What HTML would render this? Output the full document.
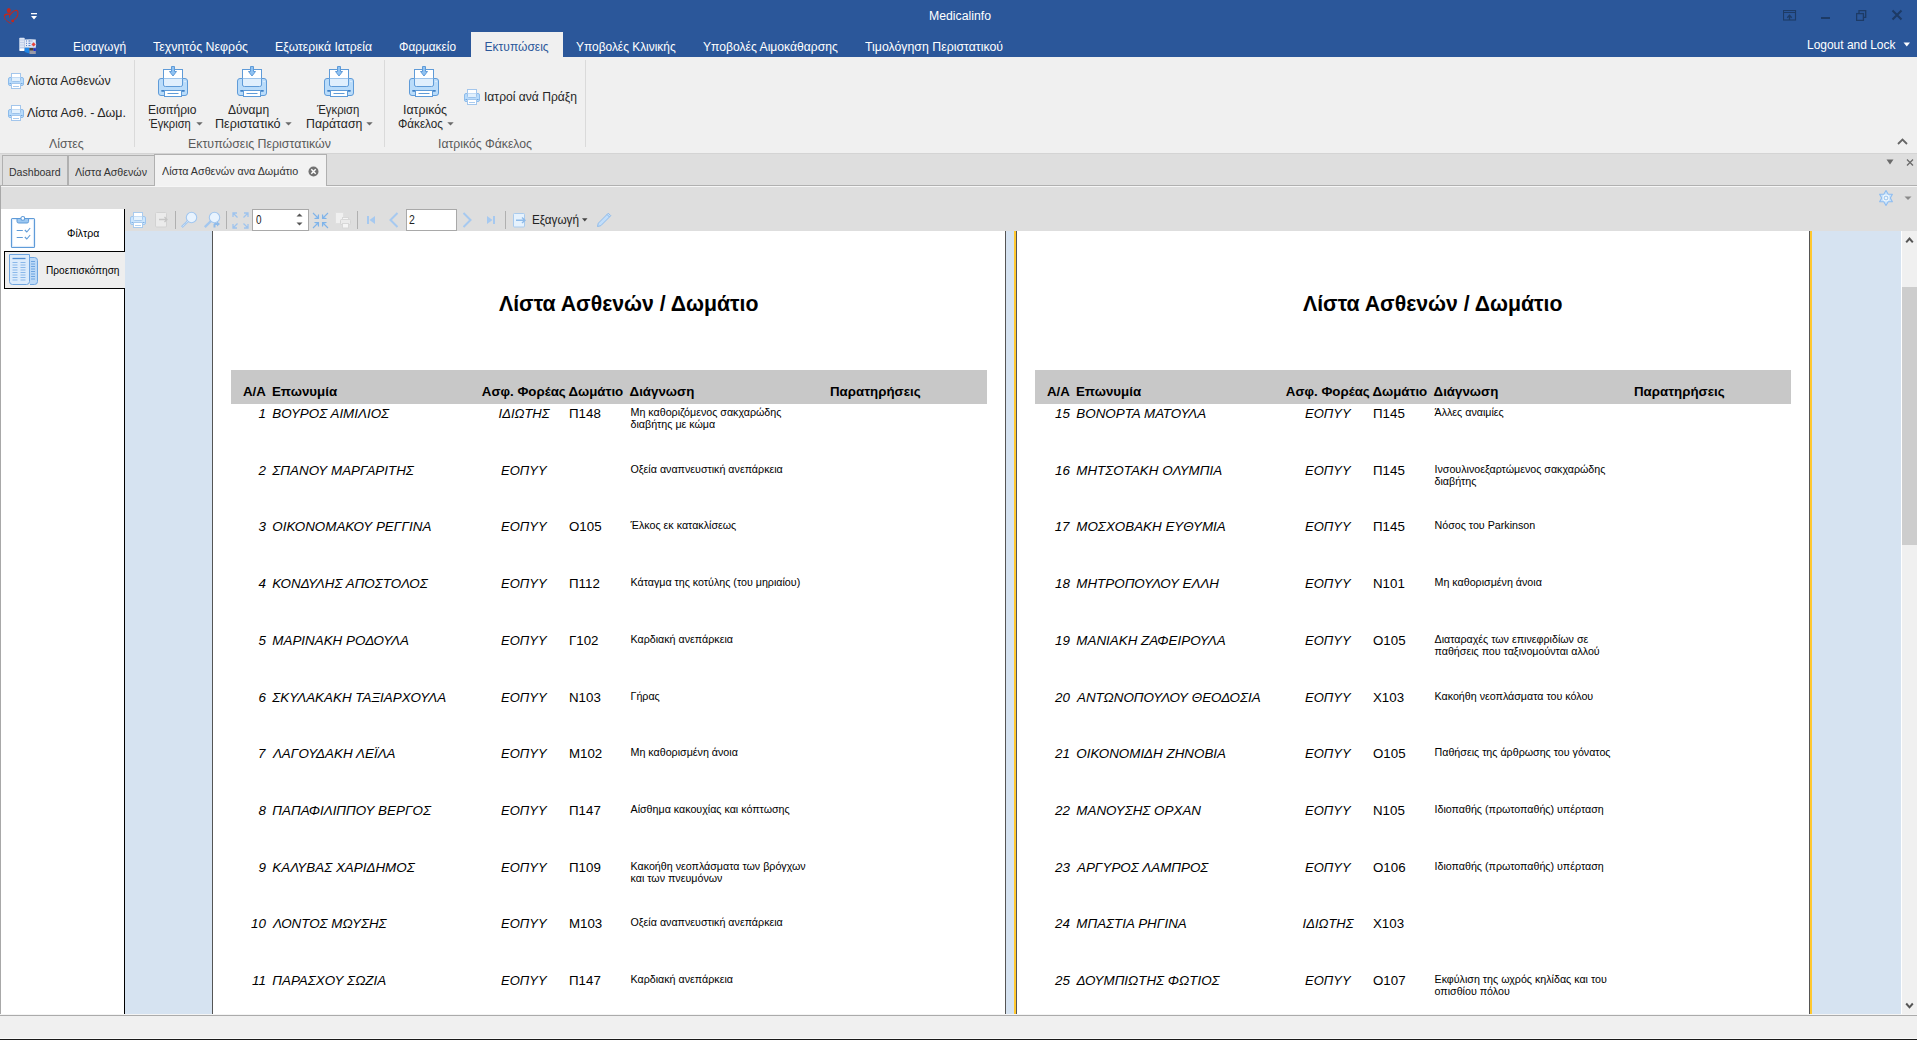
<!DOCTYPE html>
<html><head><meta charset="utf-8"><style>
html,body{margin:0;padding:0;}
body{width:1917px;height:1040px;overflow:hidden;position:relative;background:#f0f0f0;font-family:"Liberation Sans",sans-serif;}
body>div,body>span,body>svg{position:absolute;}
span{white-space:pre;transform-origin:0 0;}
</style></head><body>
<div style="left:0px;top:0px;width:1917px;height:57px;background:#2b579a;"></div>
<div style="left:471px;top:32px;width:92px;height:25px;background:#f0f0f0;"></div>
<span style="left:929.00px;top:10.34px;font-size:12px;line-height:12px;font-weight:normal;font-style:normal;color:#fff;transform:scaleX(1.0214);">Medicalinfo</span>
<span style="left:73.00px;top:40.84px;font-size:12px;line-height:12px;font-weight:normal;font-style:normal;color:#fff;">Εισαγωγή</span>
<span style="left:153.00px;top:40.84px;font-size:12px;line-height:12px;font-weight:normal;font-style:normal;color:#fff;transform:scaleX(1.0332);">Τεχνητός Νεφρός</span>
<span style="left:275.00px;top:40.84px;font-size:12px;line-height:12px;font-weight:normal;font-style:normal;color:#fff;transform:scaleX(1.0200);">Εξωτερικά Ιατρεία</span>
<span style="left:399.00px;top:40.84px;font-size:12px;line-height:12px;font-weight:normal;font-style:normal;color:#fff;transform:scaleX(0.9845);">Φαρμακείο</span>
<span style="left:576.30px;top:40.84px;font-size:12px;line-height:12px;font-weight:normal;font-style:normal;color:#fff;transform:scaleX(0.9930);">Υποβολές Κλινικής</span>
<span style="left:703.20px;top:40.84px;font-size:12px;line-height:12px;font-weight:normal;font-style:normal;color:#fff;transform:scaleX(1.0113);">Υποβολές Αιμοκάθαρσης</span>
<span style="left:865.00px;top:40.84px;font-size:12px;line-height:12px;font-weight:normal;font-style:normal;color:#fff;transform:scaleX(1.0268);">Τιμολόγηση Περιστατικού</span>
<span style="left:484.60px;top:40.84px;font-size:12px;line-height:12px;font-weight:normal;font-style:normal;color:#2b579a;">Εκτυπώσεις</span>
<span style="left:1806.50px;top:38.84px;font-size:12px;line-height:12px;font-weight:normal;font-style:normal;color:#fff;transform:scaleX(0.9966);">Logout and Lock</span>
<svg style="left:1903px;top:42px" width="8" height="6" viewBox="0 0 8 6"><path d="M0.5 0.5 L7 0.5 L3.75 4.5Z" fill="#fff"/></svg>
<svg style="left:1783px;top:10px" width="14" height="11" viewBox="0 0 14 11"><rect x="0.5" y="0.5" width="12" height="9.5" fill="none" stroke="#1d3b66" stroke-width="1.1"/><path d="M1 2.5H12.5" stroke="#1d3b66"/><path d="M6.5 10V5.5M4.3 7.7L6.5 5.3L8.7 7.7" stroke="#1d3b66" fill="none" stroke-width="1.3"/></svg>
<div style="left:1821px;top:17px;width:9px;height:2px;background:#1d3b66;"></div>
<svg style="left:1856px;top:10px" width="11" height="11" viewBox="0 0 11 11"><rect x="0.6" y="3.6" width="6.8" height="6.8" fill="none" stroke="#1d3b66" stroke-width="1.3"/><path d="M3 3.3V0.7H9.7V7.3H7.5" fill="none" stroke="#1d3b66" stroke-width="1.3"/></svg>
<svg style="left:1891px;top:9px" width="12" height="12" viewBox="0 0 12 12"><path d="M1.5 1.5L10.5 10.5M10.5 1.5L1.5 10.5" stroke="#1d3b66" stroke-width="2.1"/></svg>
<svg style="left:31px;top:12px" width="8" height="8" viewBox="0 0 8 8"><rect x="0" y="1" width="6" height="1.3" fill="#fff"/><path d="M0 4H6L3 7.5Z" fill="#fff"/></svg>
<svg style="left:0px;top:4px" width="24" height="24" viewBox="0 0 24 24"><g fill="none" stroke="#c0281e" stroke-linecap="round"><path d="M4.5 11.8Q4.8 10.3 7 10.3H9.6" stroke-width="1.5"/><path d="M9.6 10.6V13.4" stroke-width="0.9"/><path d="M4.5 12Q4.3 15.2 7 17Q9 18.4 11 19.6" stroke-width="1" stroke-dasharray="1.2 0.7"/><path d="M10.2 10.8Q12.5 7.4 15.4 6.4Q17.9 6.1 17.9 9Q18 12.5 14.7 15.4" stroke-width="1.1" stroke-dasharray="1.3 0.6"/></g><ellipse cx="8.8" cy="6.6" rx="2" ry="2.5" fill="#c0281e"/><circle cx="12.7" cy="16.7" r="1.5" fill="#c0281e"/></svg>
<svg style="left:19px;top:37px" width="18" height="18" viewBox="0 0 18 18"><rect x="0.3" y="0.8" width="5.4" height="13.2" rx="0.8" fill="#dfe7f5"/><rect x="0.8" y="12" width="4.4" height="2" fill="#fff"/><path d="M1 3H5M1 5.5H5M1 8H5M1 10.5H5" stroke="#b9c9e6" stroke-width="0.8"/><path d="M5.7 2.6Q11 1.8 16.8 2.6V10.8H5.7Z" fill="#e6ecf8"/><path d="M7 4H8M9.5 4H11.5M12.5 4H13.3M7 6.3H8M9.5 6.3H11.5M7 8.6H8M9.5 8.6H11.5M12.5 8.6H13.3" stroke="#4f78c4" stroke-width="1"/><circle cx="14.6" cy="7.4" r="2.6" fill="#cfe0f7"/><path d="M14.6 5.3L16.7 7.4L14.6 9.5L12.5 7.4Z" fill="#e8433b"/><path d="M5.7 10.7H10.5V16.5L5.7 15Z" fill="#1e86e8"/><rect x="10.5" y="11" width="6.3" height="6" fill="#9a9aa8"/><rect x="10.5" y="11" width="4" height="2.5" fill="#4a4336"/><rect x="14.5" y="11.2" width="2.3" height="2.8" fill="#1a2ed0"/></svg>
<svg style="left:8px;top:73px" width="16" height="16" viewBox="0 0 16 16"><rect x="0.5" y="4.5" width="15" height="8" rx="1.5" fill="#b8dbfb" stroke="#8dbbea"/><rect x="3.5" y="0.5" width="9" height="4" fill="#fff" stroke="#a3c6ec"/><path d="M3.5 4.5V7.5Q3.5 8.5 4.5 8.5H11.5Q12.5 8.5 12.5 7.5V4.5" fill="#e1f0fd" stroke="#9cc2ea"/><path d="M1.5 10.5H14.5" stroke="#6ea6df"/><rect x="3.5" y="10.5" width="9" height="5" fill="#fff" stroke="#a3c6ec"/><path d="M5 13.5H11" stroke="#a9cbee"/></svg>
<span style="left:27.00px;top:74.84px;font-size:12px;line-height:12px;font-weight:normal;font-style:normal;color:#262626;transform:scaleX(1.0327);">Λίστα Ασθενών</span>
<svg style="left:8px;top:105px" width="16" height="16" viewBox="0 0 16 16"><rect x="0.5" y="4.5" width="15" height="8" rx="1.5" fill="#b8dbfb" stroke="#8dbbea"/><rect x="3.5" y="0.5" width="9" height="4" fill="#fff" stroke="#a3c6ec"/><path d="M3.5 4.5V7.5Q3.5 8.5 4.5 8.5H11.5Q12.5 8.5 12.5 7.5V4.5" fill="#e1f0fd" stroke="#9cc2ea"/><path d="M1.5 10.5H14.5" stroke="#6ea6df"/><rect x="3.5" y="10.5" width="9" height="5" fill="#fff" stroke="#a3c6ec"/><path d="M5 13.5H11" stroke="#a9cbee"/></svg>
<span style="left:27.00px;top:106.84px;font-size:12px;line-height:12px;font-weight:normal;font-style:normal;color:#262626;transform:scaleX(1.0383);">Λίστα Ασθ. - Δωμ.</span>
<span style="left:49.30px;top:137.84px;font-size:12px;line-height:12px;font-weight:normal;font-style:normal;color:#5a5a5a;transform:scaleX(1.0221);">Λίστες</span>
<div style="left:134px;top:60px;width:1px;height:87px;background:#dadada;"></div>
<svg style="left:157px;top:65px" width="32" height="32" viewBox="0 0 32 32"><rect x="1.5" y="13.5" width="29" height="17" rx="2.5" fill="#badcfa" stroke="#5f9bd8"/><rect x="6.5" y="4.5" width="19" height="9" fill="#fff" stroke="#5f9bd8"/><path d="M6.5 13.5V20Q6.5 21.5 8.5 21.5H23.5Q25.5 21.5 25.5 20V13.5" fill="#e0effd" stroke="#5f9bd8"/><circle cx="28" cy="16.5" r="0.8" fill="#e6f2fe"/><path d="M14.5 1.5H17.5V6.5H19.5L16 11L12.5 6.5H14.5Z" fill="#8fc2f2" stroke="#5f9bd8"/><path d="M5 25.8H27" stroke="#3f80c6" stroke-width="1.8" stroke-linecap="round"/><rect x="7.5" y="25.5" width="17" height="6" fill="#fff" stroke="#5f9bd8"/><path d="M10.5 28.5H21.5" stroke="#5f9bd8"/></svg>
<svg style="left:236px;top:65px" width="32" height="32" viewBox="0 0 32 32"><rect x="1.5" y="13.5" width="29" height="17" rx="2.5" fill="#badcfa" stroke="#5f9bd8"/><rect x="6.5" y="4.5" width="19" height="9" fill="#fff" stroke="#5f9bd8"/><path d="M6.5 13.5V20Q6.5 21.5 8.5 21.5H23.5Q25.5 21.5 25.5 20V13.5" fill="#e0effd" stroke="#5f9bd8"/><circle cx="28" cy="16.5" r="0.8" fill="#e6f2fe"/><path d="M14.5 1.5H17.5V6.5H19.5L16 11L12.5 6.5H14.5Z" fill="#8fc2f2" stroke="#5f9bd8"/><path d="M5 25.8H27" stroke="#3f80c6" stroke-width="1.8" stroke-linecap="round"/><rect x="7.5" y="25.5" width="17" height="6" fill="#fff" stroke="#5f9bd8"/><path d="M10.5 28.5H21.5" stroke="#5f9bd8"/></svg>
<svg style="left:323px;top:65px" width="32" height="32" viewBox="0 0 32 32"><rect x="1.5" y="13.5" width="29" height="17" rx="2.5" fill="#badcfa" stroke="#5f9bd8"/><rect x="6.5" y="4.5" width="19" height="9" fill="#fff" stroke="#5f9bd8"/><path d="M6.5 13.5V20Q6.5 21.5 8.5 21.5H23.5Q25.5 21.5 25.5 20V13.5" fill="#e0effd" stroke="#5f9bd8"/><circle cx="28" cy="16.5" r="0.8" fill="#e6f2fe"/><path d="M14.5 1.5H17.5V6.5H19.5L16 11L12.5 6.5H14.5Z" fill="#8fc2f2" stroke="#5f9bd8"/><path d="M5 25.8H27" stroke="#3f80c6" stroke-width="1.8" stroke-linecap="round"/><rect x="7.5" y="25.5" width="17" height="6" fill="#fff" stroke="#5f9bd8"/><path d="M10.5 28.5H21.5" stroke="#5f9bd8"/></svg>
<span style="left:148.30px;top:103.84px;font-size:12px;line-height:12px;font-weight:normal;font-style:normal;color:#262626;transform:scaleX(1.0031);">Εισιτήριο</span>
<span style="left:149.49px;top:118.14px;font-size:12px;line-height:12px;font-weight:normal;font-style:normal;color:#262626;transform:scaleX(0.9268);">Έγκριση</span>
<svg style="left:195.5px;top:122px" width="7" height="4" viewBox="0 0 7 4"><path d="M0.3 0.2H6.7L3.5 3.5Z" fill="#6a6a6a"/></svg>
<span style="left:228.00px;top:103.84px;font-size:12px;line-height:12px;font-weight:normal;font-style:normal;color:#262626;">Δύναμη</span>
<span style="left:215.00px;top:118.14px;font-size:12px;line-height:12px;font-weight:normal;font-style:normal;color:#262626;transform:scaleX(1.0521);">Περιστατικό</span>
<svg style="left:284.5px;top:122px" width="7" height="4" viewBox="0 0 7 4"><path d="M0.3 0.2H6.7L3.5 3.5Z" fill="#6a6a6a"/></svg>
<span style="left:316.59px;top:103.84px;font-size:12px;line-height:12px;font-weight:normal;font-style:normal;color:#262626;transform:scaleX(0.9424);">Έγκριση</span>
<span style="left:306.20px;top:118.14px;font-size:12px;line-height:12px;font-weight:normal;font-style:normal;color:#262626;transform:scaleX(1.0246);">Παράταση</span>
<svg style="left:366px;top:122px" width="7" height="4" viewBox="0 0 7 4"><path d="M0.3 0.2H6.7L3.5 3.5Z" fill="#6a6a6a"/></svg>
<span style="left:187.50px;top:137.84px;font-size:12px;line-height:12px;font-weight:normal;font-style:normal;color:#5a5a5a;transform:scaleX(1.0332);">Εκτυπώσεις Περιστατικών</span>
<div style="left:384px;top:60px;width:1px;height:87px;background:#dadada;"></div>
<svg style="left:408px;top:65px" width="32" height="32" viewBox="0 0 32 32"><rect x="1.5" y="13.5" width="29" height="17" rx="2.5" fill="#badcfa" stroke="#5f9bd8"/><rect x="6.5" y="4.5" width="19" height="9" fill="#fff" stroke="#5f9bd8"/><path d="M6.5 13.5V20Q6.5 21.5 8.5 21.5H23.5Q25.5 21.5 25.5 20V13.5" fill="#e0effd" stroke="#5f9bd8"/><circle cx="28" cy="16.5" r="0.8" fill="#e6f2fe"/><path d="M14.5 1.5H17.5V6.5H19.5L16 11L12.5 6.5H14.5Z" fill="#8fc2f2" stroke="#5f9bd8"/><path d="M5 25.8H27" stroke="#3f80c6" stroke-width="1.8" stroke-linecap="round"/><rect x="7.5" y="25.5" width="17" height="6" fill="#fff" stroke="#5f9bd8"/><path d="M10.5 28.5H21.5" stroke="#5f9bd8"/></svg>
<span style="left:403.00px;top:103.84px;font-size:12px;line-height:12px;font-weight:normal;font-style:normal;color:#262626;transform:scaleX(1.0280);">Ιατρικός</span>
<span style="left:397.90px;top:118.14px;font-size:12px;line-height:12px;font-weight:normal;font-style:normal;color:#262626;transform:scaleX(0.9729);">Φάκελος</span>
<svg style="left:446.5px;top:122px" width="7" height="4" viewBox="0 0 7 4"><path d="M0.3 0.2H6.7L3.5 3.5Z" fill="#6a6a6a"/></svg>
<svg style="left:464px;top:89px" width="16" height="16" viewBox="0 0 16 16"><rect x="0.5" y="4.5" width="15" height="8" rx="1.5" fill="#b8dbfb" stroke="#8dbbea"/><rect x="3.5" y="0.5" width="9" height="4" fill="#fff" stroke="#a3c6ec"/><path d="M3.5 4.5V7.5Q3.5 8.5 4.5 8.5H11.5Q12.5 8.5 12.5 7.5V4.5" fill="#e1f0fd" stroke="#9cc2ea"/><path d="M1.5 10.5H14.5" stroke="#6ea6df"/><rect x="3.5" y="10.5" width="9" height="5" fill="#fff" stroke="#a3c6ec"/><path d="M5 13.5H11" stroke="#a9cbee"/></svg>
<span style="left:483.70px;top:90.84px;font-size:12px;line-height:12px;font-weight:normal;font-style:normal;color:#262626;transform:scaleX(1.0087);">Ιατροί ανά Πράξη</span>
<span style="left:438.00px;top:137.84px;font-size:12px;line-height:12px;font-weight:normal;font-style:normal;color:#5a5a5a;transform:scaleX(1.0184);">Ιατρικός Φάκελος</span>
<div style="left:585px;top:60px;width:1px;height:87px;background:#dadada;"></div>
<svg style="left:1897px;top:138px" width="11" height="7" viewBox="0 0 11 7"><path d="M1 6L5.5 1.5L10 6" fill="none" stroke="#666" stroke-width="1.8"/></svg>
<div style="left:0px;top:153px;width:1917px;height:1px;background:#d4d4d4;"></div>
<div style="left:0px;top:154px;width:1917px;height:31px;background:#dedede;"></div>
<div style="left:2px;top:155px;width:66px;height:31px;background:#dedede;border:1px solid #b0b0b0;border-bottom:none;box-sizing:border-box;"></div>
<div style="left:68px;top:155px;width:87px;height:31px;background:#dedede;border:1px solid #b0b0b0;border-bottom:none;box-sizing:border-box;"></div>
<div style="left:0px;top:185px;width:1917px;height:1px;background:#b0b0b0;"></div>
<div style="left:154px;top:154px;width:173px;height:32px;background:#f2f2f2;border:1px solid #b0b0b0;border-bottom:none;box-sizing:border-box;"></div>
<span style="left:8.70px;top:166.69px;font-size:11px;line-height:11px;font-weight:normal;font-style:normal;color:#333;transform:scaleX(0.9591);">Dashboard</span>
<span style="left:74.90px;top:166.69px;font-size:11px;line-height:11px;font-weight:normal;font-style:normal;color:#333;transform:scaleX(0.9690);">Λίστα Ασθενών</span>
<span style="left:161.80px;top:165.69px;font-size:11px;line-height:11px;font-weight:normal;font-style:normal;color:#333;transform:scaleX(0.9756);">Λίστα Ασθενών ανα Δωμάτιο</span>
<svg style="left:308px;top:166px" width="11" height="11" viewBox="0 0 11 11"><circle cx="5.5" cy="5.5" r="5" fill="#727272"/><path d="M3.3 3.3L7.7 7.7M7.7 3.3L3.3 7.7" stroke="#fff" stroke-width="1.4"/></svg>
<svg style="left:1886px;top:159px" width="8" height="7" viewBox="0 0 8 7"><path d="M0.5 0.5H7.5L4 5.5Z" fill="#6a6a6a"/></svg>
<svg style="left:1906px;top:159px" width="8" height="7" viewBox="0 0 8 7"><path d="M1 0.5L7 6.5M7 0.5L1 6.5" stroke="#6a6a6a" stroke-width="1.3"/></svg>
<div style="left:0px;top:186px;width:1917px;height:45px;background:#dedede;"></div>
<div style="left:1px;top:186px;width:1916px;height:1px;background:#f6f6f6;"></div>
<div style="left:0px;top:186px;width:1px;height:829px;background:#a8a8a8;"></div>
<svg style="left:1878px;top:189px" width="16" height="18" viewBox="0 0 16 18"><path d="M8 1.5L10.2 5.3H14.4L12.3 9L14.4 12.7H10.2L8 16.5L5.8 12.7H1.6L3.7 9L1.6 5.3H5.8Z" fill="#c8e2fb" stroke="#8fbdf0" stroke-width="1.1" stroke-linejoin="round"/><circle cx="8" cy="9" r="3.4" fill="#eef7fe"/><rect x="6.3" y="7.3" width="3.4" height="3.4" rx="1" fill="none" stroke="#93bde9" stroke-width="1"/></svg>
<svg style="left:1904px;top:196px" width="8" height="5" viewBox="0 0 8 5"><path d="M0.5 0.5H7.5L4 4Z" fill="#8a8a8a"/></svg>
<div style="left:1px;top:209px;width:123px;height:806px;background:#fff;"></div>
<div style="left:124px;top:209px;width:1px;height:806px;background:#000;"></div>
<div style="left:4px;top:251px;width:121px;height:38px;background:#eeeeee;border:1px solid #000;border-right:none;box-sizing:border-box;"></div>
<svg style="left:10px;top:215px" width="26" height="34" viewBox="0 0 26 34"><rect x="1.5" y="3.5" width="23" height="29" rx="1" fill="#fff" stroke="#5f9bd8" stroke-width="1.2"/><rect x="2.6" y="4.6" width="20.8" height="26.8" fill="none" stroke="#dbeafb" stroke-width="1"/><path d="M7 3.5H18.6V6.5Q18.6 8 17 8H8.6Q7 8 7 6.5Z" fill="#9cc8f2" stroke="#5f9bd8"/><circle cx="12.8" cy="3.4" r="1.9" fill="#fff" stroke="#5f9bd8" stroke-width="1.1"/><path d="M6.7 15.5H12.8M6.7 22.5H12.8" stroke="#5f9bd8" stroke-width="1.2"/><path d="M14.8 15L16.8 17L20.2 13M14.8 22L16.8 24L20.2 20" fill="none" stroke="#5f9bd8" stroke-width="1.1"/></svg>
<span style="left:66.70px;top:228.19px;font-size:11px;line-height:11px;font-weight:normal;font-style:normal;color:#000;transform:scaleX(0.9585);">Φίλτρα</span>
<svg style="left:8px;top:254px" width="31" height="32" viewBox="0 0 31 32"><path d="M20 3.5H26.5Q29.5 3.5 29.5 6.5V27.5Q29.5 30.5 26.5 30.5H22" fill="#bcd9f7" stroke="#6fa5e0"/><path d="M1.5 0.5H21.5V27.5Q21.5 30.5 18.5 30.5H4.5Q1.5 30.5 1.5 27.5Z" fill="#dcebfb" stroke="#6fa5e0"/><path d="M4.5 4.5H17.5" stroke="#4d8ad0" stroke-width="1.3"/><path d="M4.5 8.5H9.5M12.5 8.5H17.5" stroke="#8ab8ea" stroke-width="1.2"/><path d="M4.5 11.0H9.5M12.5 11.0H17.5" stroke="#8ab8ea" stroke-width="1.2"/><path d="M4.5 13.5H9.5M12.5 13.5H17.5" stroke="#8ab8ea" stroke-width="1.2"/><path d="M4.5 16.0H9.5M12.5 16.0H17.5" stroke="#8ab8ea" stroke-width="1.2"/><path d="M4.5 18.5H9.5M12.5 18.5H17.5" stroke="#8ab8ea" stroke-width="1.2"/><path d="M4.5 21.0H9.5M12.5 21.0H17.5" stroke="#8ab8ea" stroke-width="1.2"/><path d="M4.5 23.5H9.5M12.5 23.5H17.5" stroke="#8ab8ea" stroke-width="1.2"/><path d="M4.5 26.0H9.5M12.5 26.0H17.5" stroke="#8ab8ea" stroke-width="1.2"/><path d="M23 7.5H27" stroke="#6fa5e0" stroke-width="1"/><path d="M23 10.0H27" stroke="#6fa5e0" stroke-width="1"/><path d="M23 12.5H27" stroke="#6fa5e0" stroke-width="1"/><path d="M23 15.0H27" stroke="#6fa5e0" stroke-width="1"/><path d="M23 17.5H27" stroke="#6fa5e0" stroke-width="1"/><path d="M23 20.0H27" stroke="#6fa5e0" stroke-width="1"/><path d="M23 22.5H27" stroke="#6fa5e0" stroke-width="1"/><path d="M23 25.0H27" stroke="#6fa5e0" stroke-width="1"/></svg>
<span style="left:45.70px;top:265.19px;font-size:11px;line-height:11px;font-weight:normal;font-style:normal;color:#000;transform:scaleX(0.9187);">Προεπισκόπηση</span>
<div style="left:125px;top:231px;width:1776px;height:783px;background:#d6e3f1;"></div>
<div style="left:212px;top:231px;width:1px;height:783px;background:#555;"></div>
<div style="left:213px;top:231px;width:792px;height:783px;background:#fff;"></div>
<div style="left:1005px;top:231px;width:1px;height:783px;background:#555;"></div>
<div style="left:1014px;top:231px;width:2px;height:783px;background:#ffc82f;"></div>
<div style="left:1016px;top:231px;width:1px;height:783px;background:#555;"></div>
<div style="left:1017px;top:231px;width:792px;height:783px;background:#fff;"></div>
<div style="left:1809px;top:231px;width:1px;height:783px;background:#555;"></div>
<div style="left:1810px;top:231px;width:2px;height:783px;background:#ffc82f;"></div>
<div style="left:1901px;top:231px;width:1px;height:783px;background:#fff;"></div>
<div style="left:1902px;top:231px;width:15px;height:783px;background:#f0f0f0;"></div>
<div style="left:1902px;top:287px;width:15px;height:258px;background:#cdcdcd;"></div>
<svg style="left:1905px;top:236px" width="9" height="8" viewBox="0 0 9 8"><path d="M1.2 6.3L4.5 2.5L7.8 6.3" fill="none" stroke="#555" stroke-width="2"/></svg>
<svg style="left:1905px;top:1002px" width="9" height="8" viewBox="0 0 9 8"><path d="M1.2 1.5L4.5 5.3L7.8 1.5" fill="none" stroke="#555" stroke-width="2"/></svg>
<div style="left:0px;top:1014px;width:1917px;height:1px;background:#f4f4f4;"></div>
<div style="left:0px;top:1015px;width:1917px;height:1px;background:#ababab;"></div>
<div style="left:0px;top:1016px;width:1917px;height:22px;background:#f0f0f0;"></div>
<div style="left:0px;top:1038px;width:1917px;height:1px;background:#fafafa;"></div>
<div style="left:0px;top:1039px;width:1917px;height:1px;background:#1a1a1a;"></div>
<svg style="left:130px;top:212px" width="16" height="16" viewBox="0 0 16 16"><rect x="0.5" y="4.5" width="15" height="8" rx="1.5" fill="#cde6fd" stroke="#9fc6ef"/><rect x="3.5" y="0.5" width="9" height="4" fill="#fff" stroke="#a9cbee"/><path d="M3.5 4.5V7.5Q3.5 8.5 4.5 8.5H11.5Q12.5 8.5 12.5 7.5V4.5" fill="#e6f3fe" stroke="#a9cbee"/><path d="M1.5 10.5H14.5" stroke="#7fb0e4"/><rect x="3.5" y="10.5" width="9" height="5" fill="#fff" stroke="#a9cbee"/><path d="M5 13.5H11" stroke="#b4d2f0"/></svg>
<svg style="left:155px;top:212px" width="14" height="16" viewBox="0 0 14 16"><rect x="0.5" y="0.5" width="11" height="14.5" rx="1" fill="#ebebeb" stroke="#d2d2d2"/><path d="M4 7.5H11.5M9.5 5L12 7.5L9.5 10" fill="none" stroke="#c6c6c6" stroke-width="1.3"/></svg>
<div style="left:175px;top:211px;width:1px;height:18px;background:#b0b0b0;"></div>
<svg style="left:180px;top:211px" width="18" height="18" viewBox="0 0 18 18"><circle cx="11.5" cy="6.5" r="5.2" fill="#e8f3fe" stroke="#a3c7ef" stroke-width="1.1"/><path d="M8 10L1.8 16.2" stroke="#a3c7ef" stroke-width="2.4"/><path d="M8 10L1.8 16.2" stroke="#e8f3fe" stroke-width="0.8" stroke-dasharray="1 1"/></svg>
<svg style="left:203px;top:211px" width="18" height="18" viewBox="0 0 18 18"><circle cx="11.5" cy="6.5" r="5.2" fill="#e8f3fe" stroke="#a3c7ef" stroke-width="1.1"/><path d="M8 10L1.8 16.2" stroke="#a3c7ef" stroke-width="2.4"/><path d="M10.5 16.5V13.5Q10.5 12 12 12H14V10.5L17 13L14 15.5V14H12.5V16.5Z" fill="#8fbbea"/></svg>
<div style="left:226px;top:211px;width:1px;height:18px;background:#b0b0b0;"></div>
<svg style="left:232px;top:212px" width="17" height="17" viewBox="0 0 17 17"><g fill="none" stroke="#9fc4ee" stroke-width="1.3"><path d="M1 5V1H5M1 1L5.5 5.5"/><path d="M16 5V1H12M16 1L11.5 5.5"/><path d="M1 12V16H5M1 16L5.5 11.5"/><path d="M16 12V16H12M16 16L11.5 11.5"/></g></svg>
<div style="left:252px;top:209px;width:57px;height:22px;background:#fff;border:1px solid #a9a9a9;box-sizing:border-box;"></div>
<span style="left:255.50px;top:213.84px;font-size:12px;line-height:12px;font-weight:normal;font-style:normal;color:#222;transform:scaleX(0.8271);">0</span>
<svg style="left:296px;top:213px" width="7" height="4" viewBox="0 0 7 4"><path d="M0.5 3.5H6.5L3.5 0.5Z" fill="#555"/></svg>
<svg style="left:296px;top:222px" width="7" height="4" viewBox="0 0 7 4"><path d="M0.5 0.5H6.5L3.5 3.5Z" fill="#555"/></svg>
<svg style="left:312px;top:212px" width="17" height="17" viewBox="0 0 17 17"><g fill="#a9d0f5" stroke="#80b3e8" stroke-width="1.1"><path d="M1 1L6.5 6.5M6.5 2.5V6.5H2.5"/><path d="M16 1L10.5 6.5M10.5 2.5V6.5H14.5"/><path d="M1 16L6.5 10.5M6.5 14.5V10.5H2.5"/><path d="M16 16L10.5 10.5M10.5 14.5V10.5H14.5"/></g></svg>
<svg style="left:335px;top:212px" width="16" height="17" viewBox="0 0 16 17"><rect x="0.5" y="0.5" width="8" height="11" fill="#f0f0f0" stroke="#e0e0e0"/><rect x="5.5" y="7.5" width="10" height="5" rx="1" fill="#ebebeb" stroke="#d4d4d4"/><rect x="7.5" y="5.5" width="6" height="2" fill="#f5f5f5" stroke="#d8d8d8"/><rect x="7.5" y="11.5" width="6" height="4.5" fill="#f5f5f5" stroke="#d8d8d8"/></svg>
<div style="left:357px;top:211px;width:1px;height:18px;background:#b0b0b0;"></div>
<svg style="left:366px;top:215px" width="10" height="10" viewBox="0 0 10 10"><rect x="1" y="1" width="2" height="8" fill="#a6c9f0"/><path d="M9 1V9L3.5 5Z" fill="#a6c9f0"/></svg>
<svg style="left:388px;top:212px" width="11" height="16" viewBox="0 0 11 16"><path d="M9.5 1L2.5 8L9.5 15" fill="none" stroke="#a6c9f0" stroke-width="2"/></svg>
<div style="left:406px;top:209px;width:51px;height:22px;background:#fff;border:1px solid #a9a9a9;box-sizing:border-box;"></div>
<span style="left:409.30px;top:213.84px;font-size:12px;line-height:12px;font-weight:normal;font-style:normal;color:#222;transform:scaleX(0.8722);">2</span>
<svg style="left:462px;top:212px" width="11" height="16" viewBox="0 0 11 16"><path d="M1.5 1L8.5 8L1.5 15" fill="none" stroke="#a6c9f0" stroke-width="2"/></svg>
<svg style="left:486px;top:215px" width="10" height="10" viewBox="0 0 10 10"><path d="M1 1V9L6.5 5Z" fill="#a6c9f0"/><rect x="7" y="1" width="2" height="8" fill="#a6c9f0"/></svg>
<div style="left:505px;top:211px;width:1px;height:18px;background:#b0b0b0;"></div>
<svg style="left:512px;top:212px" width="15" height="16" viewBox="0 0 15 16"><rect x="1.5" y="1.5" width="11" height="13.5" rx="1" fill="#e6f2fd" stroke="#a9cbee"/><path d="M4 8.2H12.5M10 5.5L13 8.2L10 11" fill="none" stroke="#8fbbea" stroke-width="1.4"/></svg>
<span style="left:531.50px;top:213.54px;font-size:12px;line-height:12px;font-weight:normal;font-style:normal;color:#222;transform:scaleX(0.9781);">Εξαγωγή</span>
<svg style="left:582px;top:218px" width="6" height="4" viewBox="0 0 6 4"><path d="M0 0.2H5.5L2.75 3.4Z" fill="#444"/></svg>
<svg style="left:596px;top:212px" width="16" height="16" viewBox="0 0 16 16"><path d="M1.5 14.5L2.3 11.2L12.3 1.2L14.8 3.7L4.8 13.7Z" fill="#c2defa" stroke="#8fbbea" stroke-width="1"/><path d="M11 2.5L13.5 5" stroke="#8fbbea"/></svg>
<span style="left:499.00px;top:293.99px;font-size:21.27px;line-height:21.27px;font-weight:bold;font-style:normal;color:#000;">Λίστα Ασθενών / Δωμάτιο</span>
<div style="left:231px;top:370px;width:756px;height:34px;background:#c8c8c8;"></div>
<span style="left:243.00px;top:384.74px;font-size:13.3px;line-height:13.3px;font-weight:bold;font-style:normal;color:#000;">A/A</span>
<span style="left:272.00px;top:384.74px;font-size:13.3px;line-height:13.3px;font-weight:bold;font-style:normal;color:#000;">Επωνυμία</span>
<span style="left:481.80px;top:384.74px;font-size:13.3px;line-height:13.3px;font-weight:bold;font-style:normal;color:#000;">Ασφ. Φορέας</span>
<span style="left:568.40px;top:384.74px;font-size:13.3px;line-height:13.3px;font-weight:bold;font-style:normal;color:#000;">Δωμάτιο</span>
<span style="left:629.60px;top:384.74px;font-size:13.3px;line-height:13.3px;font-weight:bold;font-style:normal;color:#000;">Διάγνωση</span>
<span style="left:830.00px;top:384.74px;font-size:13.3px;line-height:13.3px;font-weight:bold;font-style:normal;color:#000;">Παρατηρήσεις</span>
<span style="left:258.55px;top:406.66px;font-size:13.4px;line-height:13.4px;font-weight:normal;font-style:italic;color:#000;">1</span>
<span style="left:272.30px;top:406.66px;font-size:13.4px;line-height:13.4px;font-weight:normal;font-style:italic;color:#000;">ΒΟΥΡΟΣ ΑΙΜΙΛΙΟΣ</span>
<span style="left:498.55px;top:407.00px;font-size:13.0px;line-height:13.0px;font-weight:normal;font-style:italic;color:#000;">ΙΔΙΩΤΗΣ</span>
<span style="left:569.00px;top:406.74px;font-size:13.3px;line-height:13.3px;font-weight:normal;font-style:normal;color:#000;">Π148</span>
<span style="left:630.50px;top:406.94px;font-size:10.7px;line-height:10.7px;font-weight:normal;font-style:normal;color:#000;">Μη καθοριζόμενος σακχαρώδης</span>
<span style="left:630.50px;top:418.64px;font-size:10.7px;line-height:10.7px;font-weight:normal;font-style:normal;color:#000;">διαβήτης με κώμα</span>
<span style="left:258.55px;top:463.66px;font-size:13.4px;line-height:13.4px;font-weight:normal;font-style:italic;color:#000;">2</span>
<span style="left:272.35px;top:463.66px;font-size:13.4px;line-height:13.4px;font-weight:normal;font-style:italic;color:#000;">ΣΠΑΝΟΥ ΜΑΡΓΑΡΙΤΗΣ</span>
<span style="left:501.03px;top:464.00px;font-size:13.0px;line-height:13.0px;font-weight:normal;font-style:italic;color:#000;">ΕΟΠΥΥ</span>
<span style="left:630.50px;top:463.94px;font-size:10.7px;line-height:10.7px;font-weight:normal;font-style:normal;color:#000;">Οξεία αναπνευστική ανεπάρκεια</span>
<span style="left:258.55px;top:519.66px;font-size:13.4px;line-height:13.4px;font-weight:normal;font-style:italic;color:#000;">3</span>
<span style="left:272.30px;top:519.66px;font-size:13.4px;line-height:13.4px;font-weight:normal;font-style:italic;color:#000;">ΟΙΚΟΝΟΜΑΚΟΥ ΡΕΓΓΙΝΑ</span>
<span style="left:501.03px;top:520.00px;font-size:13.0px;line-height:13.0px;font-weight:normal;font-style:italic;color:#000;">ΕΟΠΥΥ</span>
<span style="left:569.00px;top:519.74px;font-size:13.3px;line-height:13.3px;font-weight:normal;font-style:normal;color:#000;">Ο105</span>
<span style="left:630.60px;top:519.94px;font-size:10.7px;line-height:10.7px;font-weight:normal;font-style:normal;color:#000;">Έλκος εκ κατακλίσεως</span>
<span style="left:258.55px;top:576.66px;font-size:13.4px;line-height:13.4px;font-weight:normal;font-style:italic;color:#000;">4</span>
<span style="left:272.30px;top:576.66px;font-size:13.4px;line-height:13.4px;font-weight:normal;font-style:italic;color:#000;">ΚΟΝΔΥΛΗΣ ΑΠΟΣΤΟΛΟΣ</span>
<span style="left:501.03px;top:577.00px;font-size:13.0px;line-height:13.0px;font-weight:normal;font-style:italic;color:#000;">ΕΟΠΥΥ</span>
<span style="left:569.00px;top:576.74px;font-size:13.3px;line-height:13.3px;font-weight:normal;font-style:normal;color:#000;">Π112</span>
<span style="left:630.50px;top:576.94px;font-size:10.7px;line-height:10.7px;font-weight:normal;font-style:normal;color:#000;">Κάταγμα της κοτύλης (του μηριαίου)</span>
<span style="left:258.50px;top:633.66px;font-size:13.4px;line-height:13.4px;font-weight:normal;font-style:italic;color:#000;">5</span>
<span style="left:272.30px;top:633.66px;font-size:13.4px;line-height:13.4px;font-weight:normal;font-style:italic;color:#000;">ΜΑΡΙΝΑΚΗ ΡΟΔΟΥΛΑ</span>
<span style="left:501.03px;top:634.00px;font-size:13.0px;line-height:13.0px;font-weight:normal;font-style:italic;color:#000;">ΕΟΠΥΥ</span>
<span style="left:569.00px;top:633.74px;font-size:13.3px;line-height:13.3px;font-weight:normal;font-style:normal;color:#000;">Γ102</span>
<span style="left:630.50px;top:633.94px;font-size:10.7px;line-height:10.7px;font-weight:normal;font-style:normal;color:#000;">Καρδιακή ανεπάρκεια</span>
<span style="left:258.50px;top:690.66px;font-size:13.4px;line-height:13.4px;font-weight:normal;font-style:italic;color:#000;">6</span>
<span style="left:272.35px;top:690.66px;font-size:13.4px;line-height:13.4px;font-weight:normal;font-style:italic;color:#000;">ΣΚΥΛΑΚΑΚΗ ΤΑΞΙΑΡΧΟΥΛΑ</span>
<span style="left:501.03px;top:691.00px;font-size:13.0px;line-height:13.0px;font-weight:normal;font-style:italic;color:#000;">ΕΟΠΥΥ</span>
<span style="left:569.00px;top:690.74px;font-size:13.3px;line-height:13.3px;font-weight:normal;font-style:normal;color:#000;">Ν103</span>
<span style="left:630.50px;top:690.94px;font-size:10.7px;line-height:10.7px;font-weight:normal;font-style:normal;color:#000;">Γήρας</span>
<span style="left:258.10px;top:746.66px;font-size:13.4px;line-height:13.4px;font-weight:normal;font-style:italic;color:#000;">7</span>
<span style="left:272.95px;top:746.66px;font-size:13.4px;line-height:13.4px;font-weight:normal;font-style:italic;color:#000;">ΛΑΓΟΥΔΑΚΗ ΛΕΪΛΑ</span>
<span style="left:501.03px;top:747.00px;font-size:13.0px;line-height:13.0px;font-weight:normal;font-style:italic;color:#000;">ΕΟΠΥΥ</span>
<span style="left:569.00px;top:746.74px;font-size:13.3px;line-height:13.3px;font-weight:normal;font-style:normal;color:#000;">Μ102</span>
<span style="left:630.50px;top:746.94px;font-size:10.7px;line-height:10.7px;font-weight:normal;font-style:normal;color:#000;">Μη καθορισμένη άνοια</span>
<span style="left:258.55px;top:803.66px;font-size:13.4px;line-height:13.4px;font-weight:normal;font-style:italic;color:#000;">8</span>
<span style="left:272.30px;top:803.66px;font-size:13.4px;line-height:13.4px;font-weight:normal;font-style:italic;color:#000;">ΠΑΠΑΦΙΛΙΠΠΟΥ ΒΕΡΓΟΣ</span>
<span style="left:501.03px;top:804.00px;font-size:13.0px;line-height:13.0px;font-weight:normal;font-style:italic;color:#000;">ΕΟΠΥΥ</span>
<span style="left:569.00px;top:803.74px;font-size:13.3px;line-height:13.3px;font-weight:normal;font-style:normal;color:#000;">Π147</span>
<span style="left:630.50px;top:803.94px;font-size:10.7px;line-height:10.7px;font-weight:normal;font-style:normal;color:#000;">Αίσθημα κακουχίας και κόπτωσης</span>
<span style="left:258.55px;top:860.66px;font-size:13.4px;line-height:13.4px;font-weight:normal;font-style:italic;color:#000;">9</span>
<span style="left:272.30px;top:860.66px;font-size:13.4px;line-height:13.4px;font-weight:normal;font-style:italic;color:#000;">ΚΑΛΥΒΑΣ ΧΑΡΙΔΗΜΟΣ</span>
<span style="left:501.03px;top:861.00px;font-size:13.0px;line-height:13.0px;font-weight:normal;font-style:italic;color:#000;">ΕΟΠΥΥ</span>
<span style="left:569.00px;top:860.74px;font-size:13.3px;line-height:13.3px;font-weight:normal;font-style:normal;color:#000;">Π109</span>
<span style="left:630.50px;top:860.94px;font-size:10.7px;line-height:10.7px;font-weight:normal;font-style:normal;color:#000;">Κακοήθη νεοπλάσματα των βρόγχων</span>
<span style="left:630.50px;top:872.64px;font-size:10.7px;line-height:10.7px;font-weight:normal;font-style:normal;color:#000;">και των πνευμόνων</span>
<span style="left:251.10px;top:916.66px;font-size:13.4px;line-height:13.4px;font-weight:normal;font-style:italic;color:#000;">10</span>
<span style="left:272.95px;top:916.66px;font-size:13.4px;line-height:13.4px;font-weight:normal;font-style:italic;color:#000;">ΛΟΝΤΟΣ ΜΩΥΣΗΣ</span>
<span style="left:501.03px;top:917.00px;font-size:13.0px;line-height:13.0px;font-weight:normal;font-style:italic;color:#000;">ΕΟΠΥΥ</span>
<span style="left:569.00px;top:916.74px;font-size:13.3px;line-height:13.3px;font-weight:normal;font-style:normal;color:#000;">Μ103</span>
<span style="left:630.50px;top:916.94px;font-size:10.7px;line-height:10.7px;font-weight:normal;font-style:normal;color:#000;">Οξεία αναπνευστική ανεπάρκεια</span>
<span style="left:252.10px;top:973.66px;font-size:13.4px;line-height:13.4px;font-weight:normal;font-style:italic;color:#000;">11</span>
<span style="left:272.30px;top:973.66px;font-size:13.4px;line-height:13.4px;font-weight:normal;font-style:italic;color:#000;">ΠΑΡΑΣΧΟΥ ΣΩΖΙΑ</span>
<span style="left:501.03px;top:974.00px;font-size:13.0px;line-height:13.0px;font-weight:normal;font-style:italic;color:#000;">ΕΟΠΥΥ</span>
<span style="left:569.00px;top:973.74px;font-size:13.3px;line-height:13.3px;font-weight:normal;font-style:normal;color:#000;">Π147</span>
<span style="left:630.50px;top:973.94px;font-size:10.7px;line-height:10.7px;font-weight:normal;font-style:normal;color:#000;">Καρδιακή ανεπάρκεια</span>
<span style="left:1303.00px;top:293.99px;font-size:21.27px;line-height:21.27px;font-weight:bold;font-style:normal;color:#000;">Λίστα Ασθενών / Δωμάτιο</span>
<div style="left:1035px;top:370px;width:756px;height:34px;background:#c8c8c8;"></div>
<span style="left:1047.00px;top:384.74px;font-size:13.3px;line-height:13.3px;font-weight:bold;font-style:normal;color:#000;">A/A</span>
<span style="left:1076.00px;top:384.74px;font-size:13.3px;line-height:13.3px;font-weight:bold;font-style:normal;color:#000;">Επωνυμία</span>
<span style="left:1285.80px;top:384.74px;font-size:13.3px;line-height:13.3px;font-weight:bold;font-style:normal;color:#000;">Ασφ. Φορέας</span>
<span style="left:1372.40px;top:384.74px;font-size:13.3px;line-height:13.3px;font-weight:bold;font-style:normal;color:#000;">Δωμάτιο</span>
<span style="left:1433.60px;top:384.74px;font-size:13.3px;line-height:13.3px;font-weight:bold;font-style:normal;color:#000;">Διάγνωση</span>
<span style="left:1634.00px;top:384.74px;font-size:13.3px;line-height:13.3px;font-weight:bold;font-style:normal;color:#000;">Παρατηρήσεις</span>
<span style="left:1055.05px;top:406.66px;font-size:13.4px;line-height:13.4px;font-weight:normal;font-style:italic;color:#000;">15</span>
<span style="left:1076.30px;top:406.66px;font-size:13.4px;line-height:13.4px;font-weight:normal;font-style:italic;color:#000;">ΒΟΝΟΡΤΑ ΜΑΤΟΥΛΑ</span>
<span style="left:1305.03px;top:407.00px;font-size:13.0px;line-height:13.0px;font-weight:normal;font-style:italic;color:#000;">ΕΟΠΥΥ</span>
<span style="left:1373.00px;top:406.74px;font-size:13.3px;line-height:13.3px;font-weight:normal;font-style:normal;color:#000;">Π145</span>
<span style="left:1434.50px;top:406.94px;font-size:10.7px;line-height:10.7px;font-weight:normal;font-style:normal;color:#000;">Άλλες αναιμίες</span>
<span style="left:1055.05px;top:463.66px;font-size:13.4px;line-height:13.4px;font-weight:normal;font-style:italic;color:#000;">16</span>
<span style="left:1076.30px;top:463.66px;font-size:13.4px;line-height:13.4px;font-weight:normal;font-style:italic;color:#000;">ΜΗΤΣΟΤΑΚΗ ΟΛΥΜΠΙΑ</span>
<span style="left:1305.03px;top:464.00px;font-size:13.0px;line-height:13.0px;font-weight:normal;font-style:italic;color:#000;">ΕΟΠΥΥ</span>
<span style="left:1373.00px;top:463.74px;font-size:13.3px;line-height:13.3px;font-weight:normal;font-style:normal;color:#000;">Π145</span>
<span style="left:1434.50px;top:463.94px;font-size:10.7px;line-height:10.7px;font-weight:normal;font-style:normal;color:#000;">Ινσουλινοεξαρτώμενος σακχαρώδης</span>
<span style="left:1434.50px;top:475.64px;font-size:10.7px;line-height:10.7px;font-weight:normal;font-style:normal;color:#000;">διαβήτης</span>
<span style="left:1054.65px;top:519.66px;font-size:13.4px;line-height:13.4px;font-weight:normal;font-style:italic;color:#000;">17</span>
<span style="left:1076.30px;top:519.66px;font-size:13.4px;line-height:13.4px;font-weight:normal;font-style:italic;color:#000;">ΜΟΣΧΟΒΑΚΗ ΕΥΘΥΜΙΑ</span>
<span style="left:1305.03px;top:520.00px;font-size:13.0px;line-height:13.0px;font-weight:normal;font-style:italic;color:#000;">ΕΟΠΥΥ</span>
<span style="left:1373.00px;top:519.74px;font-size:13.3px;line-height:13.3px;font-weight:normal;font-style:normal;color:#000;">Π145</span>
<span style="left:1434.50px;top:519.94px;font-size:10.7px;line-height:10.7px;font-weight:normal;font-style:normal;color:#000;">Νόσος του Parkinson</span>
<span style="left:1055.10px;top:576.66px;font-size:13.4px;line-height:13.4px;font-weight:normal;font-style:italic;color:#000;">18</span>
<span style="left:1076.30px;top:576.66px;font-size:13.4px;line-height:13.4px;font-weight:normal;font-style:italic;color:#000;">ΜΗΤΡΟΠΟΥΛΟΥ ΕΛΛΗ</span>
<span style="left:1305.03px;top:577.00px;font-size:13.0px;line-height:13.0px;font-weight:normal;font-style:italic;color:#000;">ΕΟΠΥΥ</span>
<span style="left:1373.00px;top:576.74px;font-size:13.3px;line-height:13.3px;font-weight:normal;font-style:normal;color:#000;">Ν101</span>
<span style="left:1434.50px;top:576.94px;font-size:10.7px;line-height:10.7px;font-weight:normal;font-style:normal;color:#000;">Μη καθορισμένη άνοια</span>
<span style="left:1055.10px;top:633.66px;font-size:13.4px;line-height:13.4px;font-weight:normal;font-style:italic;color:#000;">19</span>
<span style="left:1076.30px;top:633.66px;font-size:13.4px;line-height:13.4px;font-weight:normal;font-style:italic;color:#000;">ΜΑΝΙΑΚΗ ΖΑΦΕΙΡΟΥΛΑ</span>
<span style="left:1305.03px;top:634.00px;font-size:13.0px;line-height:13.0px;font-weight:normal;font-style:italic;color:#000;">ΕΟΠΥΥ</span>
<span style="left:1373.00px;top:633.74px;font-size:13.3px;line-height:13.3px;font-weight:normal;font-style:normal;color:#000;">Ο105</span>
<span style="left:1434.50px;top:633.94px;font-size:10.7px;line-height:10.7px;font-weight:normal;font-style:normal;color:#000;">Διαταραχές των επινεφριδίων σε</span>
<span style="left:1434.50px;top:645.64px;font-size:10.7px;line-height:10.7px;font-weight:normal;font-style:normal;color:#000;">παθήσεις που ταξινομούνται αλλού</span>
<span style="left:1055.10px;top:690.66px;font-size:13.4px;line-height:13.4px;font-weight:normal;font-style:italic;color:#000;">20</span>
<span style="left:1077.00px;top:690.66px;font-size:13.4px;line-height:13.4px;font-weight:normal;font-style:italic;color:#000;">ΑΝΤΩΝΟΠΟΥΛΟΥ ΘΕΟΔΟΣΙΑ</span>
<span style="left:1305.03px;top:691.00px;font-size:13.0px;line-height:13.0px;font-weight:normal;font-style:italic;color:#000;">ΕΟΠΥΥ</span>
<span style="left:1373.00px;top:690.74px;font-size:13.3px;line-height:13.3px;font-weight:normal;font-style:normal;color:#000;">Χ103</span>
<span style="left:1434.50px;top:690.94px;font-size:10.7px;line-height:10.7px;font-weight:normal;font-style:normal;color:#000;">Κακοήθη νεοπλάσματα του κόλου</span>
<span style="left:1055.10px;top:746.66px;font-size:13.4px;line-height:13.4px;font-weight:normal;font-style:italic;color:#000;">21</span>
<span style="left:1076.30px;top:746.66px;font-size:13.4px;line-height:13.4px;font-weight:normal;font-style:italic;color:#000;">ΟΙΚΟΝΟΜΙΔΗ ΖΗΝΟΒΙΑ</span>
<span style="left:1305.03px;top:747.00px;font-size:13.0px;line-height:13.0px;font-weight:normal;font-style:italic;color:#000;">ΕΟΠΥΥ</span>
<span style="left:1373.00px;top:746.74px;font-size:13.3px;line-height:13.3px;font-weight:normal;font-style:normal;color:#000;">Ο105</span>
<span style="left:1434.50px;top:746.94px;font-size:10.7px;line-height:10.7px;font-weight:normal;font-style:normal;color:#000;">Παθήσεις της άρθρωσης του γόνατος</span>
<span style="left:1055.10px;top:803.66px;font-size:13.4px;line-height:13.4px;font-weight:normal;font-style:italic;color:#000;">22</span>
<span style="left:1076.30px;top:803.66px;font-size:13.4px;line-height:13.4px;font-weight:normal;font-style:italic;color:#000;">ΜΑΝΟΥΣΗΣ ΟΡΧΑΝ</span>
<span style="left:1305.03px;top:804.00px;font-size:13.0px;line-height:13.0px;font-weight:normal;font-style:italic;color:#000;">ΕΟΠΥΥ</span>
<span style="left:1373.00px;top:803.74px;font-size:13.3px;line-height:13.3px;font-weight:normal;font-style:normal;color:#000;">Ν105</span>
<span style="left:1434.50px;top:803.94px;font-size:10.7px;line-height:10.7px;font-weight:normal;font-style:normal;color:#000;">Ιδιοπαθής (πρωτοπαθής) υπέρταση</span>
<span style="left:1055.10px;top:860.66px;font-size:13.4px;line-height:13.4px;font-weight:normal;font-style:italic;color:#000;">23</span>
<span style="left:1077.00px;top:860.66px;font-size:13.4px;line-height:13.4px;font-weight:normal;font-style:italic;color:#000;">ΑΡΓΥΡΟΣ ΛΑΜΠΡΟΣ</span>
<span style="left:1305.03px;top:861.00px;font-size:13.0px;line-height:13.0px;font-weight:normal;font-style:italic;color:#000;">ΕΟΠΥΥ</span>
<span style="left:1373.00px;top:860.74px;font-size:13.3px;line-height:13.3px;font-weight:normal;font-style:normal;color:#000;">Ο106</span>
<span style="left:1434.50px;top:860.94px;font-size:10.7px;line-height:10.7px;font-weight:normal;font-style:normal;color:#000;">Ιδιοπαθής (πρωτοπαθής) υπέρταση</span>
<span style="left:1055.10px;top:916.66px;font-size:13.4px;line-height:13.4px;font-weight:normal;font-style:italic;color:#000;">24</span>
<span style="left:1076.30px;top:916.66px;font-size:13.4px;line-height:13.4px;font-weight:normal;font-style:italic;color:#000;">ΜΠΑΣΤΙΑ ΡΗΓΙΝΑ</span>
<span style="left:1302.55px;top:917.00px;font-size:13.0px;line-height:13.0px;font-weight:normal;font-style:italic;color:#000;">ΙΔΙΩΤΗΣ</span>
<span style="left:1373.00px;top:916.74px;font-size:13.3px;line-height:13.3px;font-weight:normal;font-style:normal;color:#000;">Χ103</span>
<span style="left:1055.05px;top:973.66px;font-size:13.4px;line-height:13.4px;font-weight:normal;font-style:italic;color:#000;">25</span>
<span style="left:1076.60px;top:973.66px;font-size:13.4px;line-height:13.4px;font-weight:normal;font-style:italic;color:#000;">ΔΟΥΜΠΙΩΤΗΣ ΦΩΤΙΟΣ</span>
<span style="left:1305.03px;top:974.00px;font-size:13.0px;line-height:13.0px;font-weight:normal;font-style:italic;color:#000;">ΕΟΠΥΥ</span>
<span style="left:1373.00px;top:973.74px;font-size:13.3px;line-height:13.3px;font-weight:normal;font-style:normal;color:#000;">Ο107</span>
<span style="left:1434.50px;top:973.94px;font-size:10.7px;line-height:10.7px;font-weight:normal;font-style:normal;color:#000;">Εκφύλιση της ωχρός κηλίδας και του</span>
<span style="left:1434.50px;top:985.64px;font-size:10.7px;line-height:10.7px;font-weight:normal;font-style:normal;color:#000;">οπισθίου πόλου</span>
</body></html>
